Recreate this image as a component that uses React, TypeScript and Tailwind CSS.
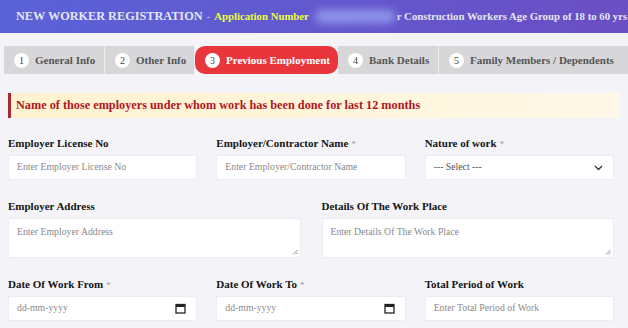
const serif = { fontFamily: '"Liberation Serif", "Times New Roman", serif' };

const tabs = [
  { n: 1, label: "General Info", w: "w-[101px]" },
  { n: 2, label: "Other Info", w: "w-[90px]" },
  { n: 3, label: "Previous Employment", w: "w-[143px]", active: true },
  { n: 4, label: "Bank Details", w: "w-[101px]" },
  { n: 5, label: "Family Members / Dependents", w: "w-[190px]" },
];

function Label({ text, req }: { text: string; req?: boolean }) {
  return (
    <div className="mb-[4px] h-[15px] text-[11px] font-bold leading-[15px] text-[#151515]">
      {text}
      {req && <span className="ml-[3px] text-[9px] font-normal text-[#999]">*</span>}
    </div>
  );
}

function Field({ placeholder, className = "" }: { placeholder: string; className?: string }) {
  return (
    <div
      className={
        "flex h-[25px] items-center rounded-[2px] border border-[#ececf1] bg-white px-[8px] text-[9.75px] text-[#8a8a8a] " +
        className
      }
    >
      {placeholder}
    </div>
  );
}

function Calendar() {
  return (
    <svg width="11" height="11" viewBox="0 0 11 11" className="ml-auto">
      <rect x="1" y="1.5" width="9" height="8.5" fill="none" stroke="#222" strokeWidth="1.3" />
      <rect x="1" y="1.5" width="9" height="2.5" fill="#222" />
    </svg>
  );
}

function DateField() {
  return (
    <div className="flex h-[25px] items-center rounded-[2px] border border-[#ececf1] bg-white pl-[8px] pr-[10px] text-[9.75px] text-[#8a8a8a]">
      dd-mm-yyyy
      <Calendar />
    </div>
  );
}

function TextArea({ placeholder }: { placeholder: string }) {
  return (
    <div className="relative h-[40px] rounded-[2px] border border-[#ececf1] bg-white px-[8px] pt-[6px] text-[9.75px] text-[#8a8a8a]">
      {placeholder}
      <svg width="6" height="6" viewBox="0 0 6 6" className="absolute bottom-[2px] right-[2px]">
        <path d="M1 5.5L5.5 1M3.5 5.5L5.5 3.5" stroke="#777" strokeWidth="0.8" />
      </svg>
    </div>
  );
}

export default function App() {
  return (
    <div className="h-[328px] w-[628px] overflow-hidden bg-[#f4f4f8]" style={serif}>
      <div className="flex h-[33px] items-center overflow-hidden whitespace-nowrap bg-gradient-to-r from-[#5a62d8] to-[#6a4ec4] pl-[16px] font-bold text-[#e4e6f4]">
        <span className="text-[12.25px]">NEW WORKER REGISTRATION</span>
        <span className="mx-[4px] text-[11px] font-normal text-[#c9cbe8]">-</span>
        <span className="text-[10.75px] text-[#eaff3a]">Application Number</span>
        <span className="ml-[6px] h-[13px] w-[80px] shrink-0 rounded-full bg-[#8f96ea] blur-[4px]" />
        <span className="ml-[2px] text-[10.75px]">r Construction Workers Age Group of 18 to 60 yrs</span>
      </div>

      <div className="mt-[13px] flex h-[28px] pl-[4px]">
        {tabs.map((t) => (
          <div
            key={t.n}
            className={
              "flex shrink-0 items-center gap-[6px] pl-[10px] text-[11px] font-bold whitespace-nowrap " +
              t.w +
              (t.active
                ? " rounded-[10px] bg-[#e8363c] text-white"
                : " border-r border-[#ececec] bg-[#d7d7d9] text-[#555]")
            }
          >
            <span className="flex h-[15px] w-[15px] items-center justify-center rounded-full bg-white text-[10px] font-normal text-[#444]">
              {t.n}
            </span>
            {t.label}
          </div>
        ))}
      </div>

      <div className="mx-[8px] mt-[19px] flex h-[25px] items-center border-l-[3px] border-[#a8283a] bg-gradient-to-r from-[#fff2d0] via-[#fff5da] to-[#fff8e8] pl-[5px] text-[12.25px] font-bold text-[#b3141e]">
        Name of those employers under whom work has been done for last 12 months
      </div>

      <div className="pl-[8px] pr-[14px] pt-[18px]">
        <div className="grid grid-cols-3 gap-x-[19px]">
          <div>
            <Label text="Employer License No" />
            <Field placeholder="Enter Employer License No" />
          </div>
          <div>
            <Label text="Employer/Contractor Name" req />
            <Field placeholder="Enter Employer/Contractor Name" />
          </div>
          <div>
            <Label text="Nature of work" req />
            <div className="flex h-[25px] items-center rounded-[2px] border border-[#ececf1] bg-white pl-[8px] pr-[10px] text-[9.75px] text-[#555]">
              --- Select ---
              <svg width="9" height="6" viewBox="0 0 9 6" className="ml-auto">
                <path d="M1 1L4.5 4.5L8 1" fill="none" stroke="#333" strokeWidth="1.3" />
              </svg>
            </div>
          </div>
        </div>

        <div className="mt-[19px] grid grid-cols-2 gap-x-[21px]">
          <div>
            <Label text="Employer Address" />
            <TextArea placeholder="Enter Employer Address" />
          </div>
          <div>
            <Label text="Details Of The Work Place" />
            <TextArea placeholder="Enter Details Of The Work Place" />
          </div>
        </div>

        <div className="mt-[19px] grid grid-cols-3 gap-x-[19px]">
          <div>
            <Label text="Date Of Work From" req />
            <DateField />
          </div>
          <div>
            <Label text="Date Of Work To" req />
            <DateField />
          </div>
          <div>
            <Label text="Total Period of Work" />
            <Field placeholder="Enter Total Period of Work" className="bg-[#f7f7fa]" />
          </div>
        </div>
      </div>
    </div>
  );
}
